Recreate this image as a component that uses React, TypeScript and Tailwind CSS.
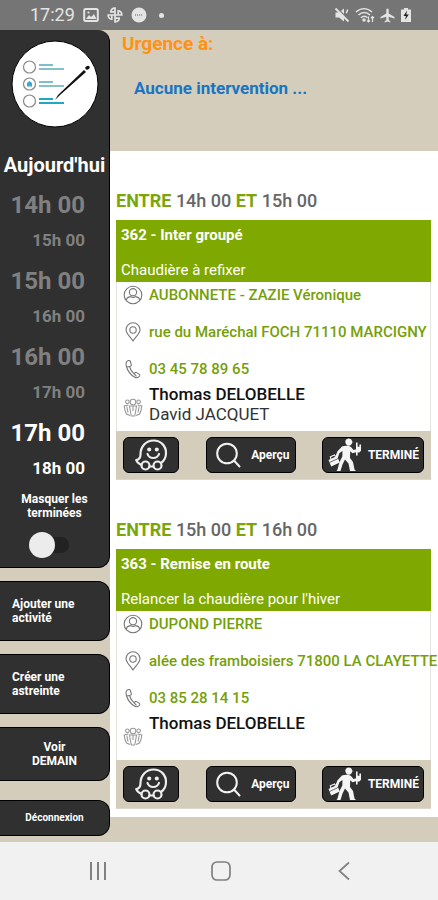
import React from "react";

type Job = {
  id: string;
  from: string;
  to: string;
  title: string;
  description: string;
  client: string;
  address: string;
  phone: string;
  lead: string;
  helper?: string;
};

const jobs: Job[] = [
  {
    id: "362",
    from: "14h 00",
    to: "15h 00",
    title: "362 - Inter groupé",
    description: "Chaudière à refixer",
    client: "AUBONNETE - ZAZIE Véronique",
    address: "rue du Maréchal FOCH 71110 MARCIGNY",
    phone: "03 45 78 89 65",
    lead: "Thomas DELOBELLE",
    helper: "David JACQUET",
  },
  {
    id: "363",
    from: "15h 00",
    to: "16h 00",
    title: "363 - Remise en route",
    description: "Relancer la chaudière pour l'hiver",
    client: "DUPOND PIERRE",
    address: "alée des framboisiers 71800 LA CLAYETTE",
    phone: "03 85 28 14 15",
    lead: "Thomas DELOBELLE",
  },
];

const slots = [
  { start: "14h 00", end: "15h 00", current: false },
  { start: "15h 00", end: "16h 00", current: false },
  { start: "16h 00", end: "17h 00", current: false },
  { start: "17h 00", end: "18h 00", current: true },
];

function StatusBar() {
  return (
    <header className="flex h-[30px] shrink-0 items-center justify-between bg-[#757575] pl-[30px] pr-[26px] text-[#e4e4e4]">
      <div className="flex items-center gap-2">
        <span className="text-[18px] leading-5">17:29</span>
        <svg width="16" height="16" viewBox="0 0 16 16" aria-hidden="true">
          <rect x="1.2" y="2" width="13.6" height="12" rx="1.5" fill="none" stroke="currentColor" strokeWidth="2" />
          <path d="M3 12l3-4 2 2 3-3 2.500 5z" fill="currentColor" />
          <circle cx="5.500" cy="5.500" r="1.100" fill="currentColor" />
        </svg>
        <svg width="16" height="16" viewBox="0 0 16 16" fill="none" stroke="currentColor" strokeWidth="1.700" aria-hidden="true">
          <path d="M8 8V1.200C5 1.200 3.800 3 3.800 4.800H8M8 8h6.800C14.800 5 13 3.800 11.200 3.800V8M8 8v6.800c3 0 4.200-1.800 4.200-3.600H8M8 8H1.200c0 3 1.800 4.200 3.600 4.200V8" />
        </svg>
        <svg width="16" height="16" viewBox="0 0 16 16" aria-hidden="true">
          <circle cx="8" cy="8" r="7.500" fill="currentColor" />
          <path d="M4.500 7v2M6.500 7v2M8.500 7v2M10.500 7v2" stroke="#a0a0a0" strokeWidth="1" />
        </svg>
        <span className="ml-1 size-[5px] rounded-full bg-[#e4e4e4]" />
      </div>
      <div className="flex items-center gap-[5px]">
        <svg width="16" height="16" viewBox="0 0 16 16" aria-hidden="true">
          <path d="M1.500 5.500h3.500L10 1.500v13l-5-4H1.500z" fill="currentColor" />
          <path d="M12 6c1-.5 1.500-1.500 1.500-3.500" stroke="currentColor" strokeWidth="1.500" fill="none" />
          <path d="M3 1l12.500 12.500" stroke="#757575" strokeWidth="1.500" />
          <path d="M1.500 1.500l13 13" stroke="currentColor" strokeWidth="1.800" />
        </svg>
        <svg width="20" height="16" viewBox="0 0 20 16" fill="none" stroke="currentColor" strokeWidth="1.500" aria-hidden="true">
          <path d="M1 5c5-4.500 11-4.500 16 0M3.500 8c3.500-3.200 8-3.200 11.500 0M6 10.800c2-2 4.500-2 6.500 0" />
          <circle cx="9" cy="13" r="1" fill="currentColor" />
          <path d="M13.500 9.500v5.500M12 13.500l1.500 1.500 1.500-1.500M17.500 15V9.500M16 11l1.500-1.500L19 11" strokeWidth="1.200" />
        </svg>
        <svg width="15" height="15" viewBox="0 0 15 15" fill="currentColor" aria-hidden="true">
          <path d="M7.500.5c.8 0 1.200.8 1.200 1.800v3.200L14.500 9v1.500L8.700 8.800v3.200l1.600 1.200v1.200l-2.800-.8-2.800.8v-1.200L6.300 12V8.800L.5 10.500V9l5.800-3.500V2.300C6.300 1.300 6.700.5 7.500.5z" />
        </svg>
        <svg width="12" height="16" viewBox="0 0 12 16" aria-hidden="true">
          <path d="M1 2.500h3V1h4v1.500h3V15H1z" fill="currentColor" />
          <path d="M7 3.500L3.500 9H6l-1 4L8.800 7.500H6.300z" fill="#222" />
        </svg>
      </div>
    </header>
  );
}

function ChecklistLogo() {
  return (
    <svg className="mx-auto block" width="88" height="88" viewBox="0 0 88 88" role="img" aria-label="Liste">
      <circle cx="44" cy="44" r="43" fill="#fff" stroke="#000" />
      <g fill="none" stroke="#888" strokeWidth="1.200">
        <circle cx="18.500" cy="27" r="6" />
        <circle cx="18.500" cy="44" r="6" />
        <circle cx="18.500" cy="61" r="6" />
      </g>
      <path d="M16 46.500v-3.500l2.500-2 2.500 2v3.500z" fill="#35a9cf" />
      <g strokeWidth="2">
        <path d="M28 25h14M28 42h14" stroke="#79bfd0" />
        <path d="M28 29h25M28 46h25" stroke="#86c0cb" />
        <path d="M28 59h14M28 63h25" stroke="#1fa9c0" />
      </g>
      <path d="M44 60l3-5 26-25 2 2-26 23z" fill="#111" />
      <path d="M76 28l1-.500" stroke="#111" strokeWidth="3.500" strokeLinecap="round" />
    </svg>
  );
}

function Sidebar() {
  const action =
    "flex w-full items-center rounded-r-xl border border-l-0 border-black bg-[#303030] text-xs leading-[14px] font-bold text-white";
  return (
    <aside className="flex w-[110px] shrink-0 flex-col gap-[13px] bg-[#d5cdbb] pb-[6px]">
      <section className="flex h-[538px] flex-col rounded-r-xl border-r border-b border-black bg-[#303030] pt-[10px] font-bold text-white">
        <ChecklistLogo />
        <h1 className="mt-[25px] text-center text-xl leading-6 whitespace-nowrap">Aujourd'hui</h1>
        <ol className="mt-[9px] pr-6 text-right">
          {slots.map((slot) => (
            <li key={slot.start} className={slot.current ? "h-[76px]" : "h-[76px] text-[#808080]"}>
              <div className="text-2xl leading-[38px]">{slot.start}</div>
              <div className="text-[17px] leading-8">{slot.end}</div>
            </li>
          ))}
        </ol>
        <label htmlFor="hide-done" className="mx-auto mt-[2px] w-20 text-center text-xs leading-[14px]">
          Masquer les terminées
        </label>
        <input
          id="hide-done"
          type="checkbox"
          role="switch"
          className="relative mt-3 ml-[29px] h-[26px] w-10 shrink-0 appearance-none before:absolute before:top-[5px] before:right-0 before:h-4 before:w-8 before:rounded-full before:bg-[#222] after:absolute after:top-0 after:left-0 after:size-[26px] after:rounded-full after:bg-[#ececec] checked:after:left-[14px]"
        />
      </section>
      <button type="button" className={action + " h-[60px] pr-6 pl-3 text-left"}>
        Ajouter une activité
      </button>
      <button type="button" className={action + " h-[60px] pr-6 pl-3 text-left"}>
        Créer une astreinte
      </button>
      <button type="button" className={action + " h-[54px] justify-center px-6 text-center"}>
        Voir DEMAIN
      </button>
      <button type="button" className={action + " mt-[6px] h-9 justify-center text-[10px]"}>
        Déconnexion
      </button>
    </aside>
  );
}

const line = {
  width: 20,
  height: 20,
  viewBox: "0 0 20 20",
  fill: "none",
  stroke: "#777",
  strokeWidth: 1.1,
  "aria-hidden": true,
} as const;

function PersonIcon() {
  return (
    <svg {...line} className="shrink-0">
      <circle cx="10" cy="10" r="8.800" />
      <circle cx="10" cy="7.200" r="3.600" />
      <path d="M3.500 16v-1c0-2 1.500-3 4-3.400 1.500 1 3.500 1 5 0 2.500.4 4 1.400 4 3.400v1" />
    </svg>
  );
}

function PinIcon() {
  return (
    <svg {...line} className="shrink-0">
      <path d="M10 19C7 14.500 3 11.500 3 7.800a7 7 0 0 1 14 0c0 3.700-4 6.700-7 11.200z" />
      <circle cx="10" cy="8" r="3.200" />
    </svg>
  );
}

function PhoneIcon() {
  return (
    <svg {...line} className="shrink-0">
      <path d="M5.500 1.500C3.500 2 2.500 4 3.300 7c1.200 4.800 4.500 9 8.500 11.200 2 1.100 4.200.3 4.900-1.400.3-.8 0-1.300-.6-1.700l-2.500-1.500c-.7-.4-1.300-.2-1.700.3l-.7.9C8.800 12.800 7.200 10.300 6.500 7.500l1.200-.5c.6-.3.8-.8.6-1.400l-1-3.300c-.3-.8-.9-1-1.800-.8z" />
      <path d="M11.200 14.800l2.300 2.500M6.500 7.500l-2.800.5" />
    </svg>
  );
}

function TeamIcon() {
  return (
    <svg {...line} stroke="#999" className="shrink-0">
      <circle cx="10" cy="5" r="2.800" />
      <circle cx="4.400" cy="4.800" r="1.800" />
      <circle cx="15.600" cy="4.800" r="1.800" />
      <path d="M6.500 9h7l-.8 5-1 5H8.300l-1-5zM10 9v5M5.500 8L1.200 9l.8 4.500 1.500 3.500 3.500 1.500M14.500 8l4.300 1-.8 4.500-1.500 3.500-3.500 1.500M3.800 9.500l1.200 6M16.200 9.500l-1.200 6" />
    </svg>
  );
}

function WazeIcon() {
  return (
    <svg width="34" height="34" viewBox="0 0 34 34" fill="none" stroke="#ededed" strokeWidth="2.200" strokeLinecap="round" strokeLinejoin="round" aria-hidden="true">
      <path d="M7.500 27C5 26 3 24.500 2.200 22c3-.2 4.300-1.700 4.300-5.700C6.500 8.500 12 2.500 19.500 2.500S32 8 32 15c0 5-2 8-5 10" />
      <path d="M15.500 28.500h4" />
      <circle cx="11.500" cy="27.500" r="4" />
      <circle cx="23.500" cy="27.500" r="4" />
      <path d="M13.500 16c1 2.800 3 4 5.700 4s4.800-1.200 5.800-4" />
      <circle cx="15.200" cy="11.500" r="1" fill="#ededed" />
      <circle cx="22.800" cy="11.500" r="1" fill="#ededed" />
    </svg>
  );
}

function MagnifierIcon() {
  return (
    <svg width="26" height="26" viewBox="0 0 26 26" fill="none" stroke="#f2f2f2" strokeWidth="2" strokeLinecap="round" aria-hidden="true">
      <circle cx="12" cy="11.500" r="9.800" />
      <path d="M19 18.500l5.500 6" />
    </svg>
  );
}

function WorkerIcon() {
  return (
    <svg width="36" height="34" viewBox="0 0 36 34" aria-hidden="true">
      <g fill="#f5f5f5">
        <path d="M18.300 3.800C18.300 1.800 19.800.5 21.700.5s3.300 1.200 3.400 3l1.600.8h-1.500c-.2 2.200-1.500 3.500-3.400 3.500s-3.500-1.700-3.500-4z" />
        <path d="M15 8.500c3-1.200 7-1 9 .5l2.500 3 3.500-1 .7 2.700-5.200 1.600-2.300-2-.2 6.700 3 4 1.500 7.500 1.500 1.500h-6l-1.500-7.500-3.500-4-2.500 5-2 6.500H9.500l1-1.500 2-7.500 2.800-5.500.2-5.500-3 2-1.800 5-2.700-.8 2.500-6z" />
        <path d="M1.500 22l8.500-4 2.800 6.500-8.600 4z" />
        <path d="M29 4.500h1.600v4.300h1.800V6.500H34v6.300l-1.600 1.700h-1.800v3H29z" />
      </g>
      <path d="M4 21l-.6-2.200L7.500 17l1 1.500" fill="none" stroke="#f5f5f5" strokeWidth="1.200" />
      <path d="M2.500 24.500l9-4.200" stroke="#303030" strokeWidth=".7" />
    </svg>
  );
}

function JobCard({ job }: { job: Job }) {
  const link = "text-[15px] leading-5 font-medium whitespace-nowrap text-[#759f08]";
  const button =
    "flex h-9 shrink-0 items-center rounded-md border border-black bg-[#303030] text-xs font-bold text-white";
  return (
    <section>
      <h2 className="text-lg leading-[18px] font-medium text-[#666]">
        <span className="font-bold text-[#7ba60a]">ENTRE</span> {job.from}{" "}
        <span className="font-bold text-[#7ba60a]">ET</span> {job.to}
      </h2>
      <article className="mt-[10px] border-b border-[#ddd8cc]">
        <div className="flex h-[62px] flex-col justify-between bg-[#7fa900] px-[5px] pt-[6px] pb-[3px] text-[15px] leading-[18px] text-white">
          <h3 className="font-bold">{job.title}</h3>
          <p>{job.description}</p>
        </div>
        <div className="flex flex-col border-x border-[#e6e4df] pl-[6px]">
          <div className="flex flex-col gap-[11px]">
            <div className="flex h-[26px] items-center gap-[6px]">
              <PersonIcon />
              <a href="#client" className={link}>{job.client}</a>
            </div>
            <div className="flex h-[26px] items-center gap-[6px]">
              <PinIcon />
              <a href="#adresse" className={link}>{job.address}</a>
            </div>
            <div className="flex h-[26px] items-center gap-[6px]">
              <PhoneIcon />
              <a href={"tel:" + job.phone.replaceAll(" ", "")} className={link}>{job.phone}</a>
            </div>
          </div>
          <div className="flex min-h-[49px] items-center gap-[6px]">
            <TeamIcon />
            <div className="self-start pt-[2px] text-[17px] leading-5 text-[#333]">
              <p className="font-medium text-[#111]">{job.lead}</p>
              {job.helper && <p>{job.helper}</p>}
            </div>
          </div>
        </div>
        <div className="flex items-center justify-between bg-[#d5cdbb] px-[7px] py-[6px]">
          <button type="button" aria-label="Waze" className={button + " w-14 justify-center"}>
            <WazeIcon />
          </button>
          <button type="button" className={button + " w-[90px] justify-between pr-[5px] pl-2"}>
            <MagnifierIcon />
            Aperçu
          </button>
          <button type="button" className={button + " w-[102px] justify-between px-1"}>
            <WorkerIcon />
            TERMINÉ
          </button>
        </div>
      </article>
    </section>
  );
}

function NavBar() {
  return (
    <nav aria-label="Navigation" className="flex h-[58px] shrink-0 items-center justify-between bg-[#f1f1f1] pr-[84px] pl-[88px] text-[#808080]">
      <button type="button" aria-label="Applications récentes">
        <svg width="20" height="20" viewBox="0 0 20 20" stroke="currentColor" strokeWidth="2" aria-hidden="true">
          <path d="M3 1v18M10 1v18M17 1v18" />
        </svg>
      </button>
      <button type="button" aria-label="Accueil">
        <svg width="20" height="20" viewBox="0 0 20 20" fill="none" stroke="currentColor" strokeWidth="1.700" aria-hidden="true">
          <rect x="1" y="1" width="18" height="18" rx="5" />
        </svg>
      </button>
      <button type="button" aria-label="Retour">
        <svg width="20" height="20" viewBox="0 0 20 20" fill="none" stroke="currentColor" strokeWidth="1.700" aria-hidden="true">
          <path d="M15 1.500L5.500 10l9.500 8.500" />
        </svg>
      </button>
    </nav>
  );
}

export default function App() {
  return (
    <div className="flex min-h-screen flex-col bg-[#d5cdbb] font-[Roboto,'Liberation_Sans',sans-serif]">
      <StatusBar />
      <div className="flex grow">
        <Sidebar />
        <main className="flex min-w-0 grow flex-col">
          <section className="h-[121px] pl-3">
            <h2 className="pt-[3px] text-[19px] leading-[22px] font-bold text-[#ff9213]">Urgence à:</h2>
            <p className="mt-[22px] pl-3 text-[17px] leading-[22px] font-bold text-[#1576c4]">Aucune intervention ...</p>
          </section>
          <div className="flex flex-col gap-[41px] bg-white pt-[41px] pr-[7px] pb-2 pl-[6px]">
            {jobs.map((job) => (
              <JobCard key={job.id} job={job} />
            ))}
          </div>
        </main>
      </div>
      <NavBar />
    </div>
  );
}
